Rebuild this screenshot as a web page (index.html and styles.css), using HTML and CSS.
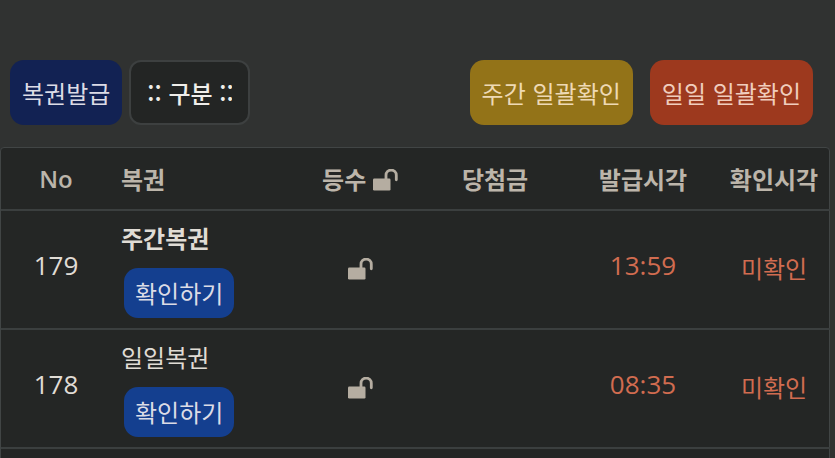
FILE: index.html
```
<!DOCTYPE html>
<html lang="ko">
<head>
    <meta charset="UTF-8">
    <meta name="viewport" content="width=device-width, initial-scale=1.0">
    <title>복권</title>
    <link rel="stylesheet" href="styles.css">
</head>
<body>
    <svg class="hidden">
        <symbol id="unlock" viewBox="0 0 25 22">
            <rect x="0" y="9.5" width="17.5" height="12" rx="1.2" fill="currentColor"/>
            <path d="M13 10.5V6.2a5 5 0 0 1 10.3 0v4.6" fill="none" stroke="currentColor" stroke-width="2.8" stroke-linecap="round"/>
        </symbol>
    </svg>

    <!-- Toolbar -->
    <div class="toolbar">
        <button type="button" class="btn btn-navy">복권발급</button>
        <select class="filter" aria-label="구분">
            <option>:: 구분 ::</option>
            <option>주간복권</option>
            <option>일일복권</option>
        </select>
        <div class="actions">
            <button type="button" class="btn btn-gold">주간 일괄확인</button>
            <button type="button" class="btn btn-red">일일 일괄확인</button>
        </div>
    </div>

    <!-- Lottery list -->
    <div class="list">
        <table>
            <colgroup>
                <col class="col-no">
                <col class="col-name">
                <col class="col-rank">
                <col class="col-prize">
                <col class="col-issued">
                <col class="col-checked">
            </colgroup>
            <thead>
                <tr>
                    <th class="no">No</th>
                    <th class="name">복권</th>
                    <th>등수 <svg class="lock"><use href="#unlock"/></svg></th>
                    <th>당첨금</th>
                    <th>발급시각</th>
                    <th>확인시각</th>
                </tr>
            </thead>
            <tbody>
                <tr>
                    <td class="num">179</td>
                    <td class="name"><strong>주간복권</strong><button type="button" class="btn btn-check">확인하기</button></td>
                    <td><svg class="lock"><use href="#unlock"/></svg></td>
                    <td></td>
                    <td class="num pending">13:59</td>
                    <td class="pending">미확인</td>
                </tr>
                <tr>
                    <td class="num">178</td>
                    <td class="name"><span>일일복권</span><button type="button" class="btn btn-check">확인하기</button></td>
                    <td><svg class="lock"><use href="#unlock"/></svg></td>
                    <td></td>
                    <td class="num pending">08:35</td>
                    <td class="pending">미확인</td>
                </tr>
            </tbody>
        </table>
    </div>
</body>
</html>
```
FILE: styles.css
```
* {
    box-sizing: border-box;
}
body {
    margin: 0;
    padding-top: 60px;
    background: #303231;
    color: #e0dcd5;
    font-family: "Noto Sans CJK KR", sans-serif;
    font-size: 24px;
    line-height: 32px;
    overflow: hidden;
}
.hidden {
    display: none;
}
.toolbar {
    display: flex;
    gap: 7px;
    padding: 0 22px 0 10px;
}
.actions {
    display: flex;
    gap: 17px;
    margin-left: auto;
}
.btn {
    height: 65px;
    padding: 0 12px;
    border: none;
    border-radius: 14px;
    color: #dcdce6;
    font: inherit;
    white-space: nowrap;
    cursor: pointer;
}
.btn-navy {
    background: #122253;
}
.btn-gold {
    background: #937318;
    color: #eed9b4;
}
.btn-red {
    background: #9d391e;
    color: #f0cdbd;
}
.btn-check {
    display: block;
    height: 50px;
    margin: 14px 0 0 3px;
    padding: 0 11px;
    background: #143f8f;
}
.filter {
    appearance: none;
    width: 121px;
    height: 65px;
    padding: 0 16px;
    border: 2px solid #3d4040;
    border-radius: 12px;
    background: #232524;
    color: #f0eeea;
    font: inherit;
    font-weight: 500;
}
.list {
    margin: 22px 5px 0 0;
    padding-bottom: 24px;
    border: 1px solid #414545;
    border-radius: 4px;
    background: #242625;
}
table {
    width: 100%;
    table-layout: fixed;
    border-collapse: collapse;
}
.col-no { width: 110px; }
.col-name { width: 187px; }
.col-rank { width: 124px; }
.col-prize { width: 146px; }
.col-issued { width: 150px; }
.col-checked { width: 112px; }
th, td {
    padding: 0;
    border-bottom: 2px solid #3b3f3f;
    text-align: center;
    vertical-align: middle;
    white-space: nowrap;
}
th {
    height: 62px;
    color: #bcb5aa;
    font-weight: bold;
}
th.no {
    font-family: "Open Sans", sans-serif;
    font-weight: 600;
}
td {
    height: 119px;
    padding-bottom: 4px;
}
.name {
    padding: 0 0 0 10px;
    text-align: left;
}
.num {
    padding-bottom: 10px;
    font-family: "Open Sans", sans-serif;
    font-size: 26px;
}
.pending {
    color: #d16c50;
}
.lock {
    width: 25px;
    height: 22px;
    color: #b5ada1;
    vertical-align: -2px;
}
```
